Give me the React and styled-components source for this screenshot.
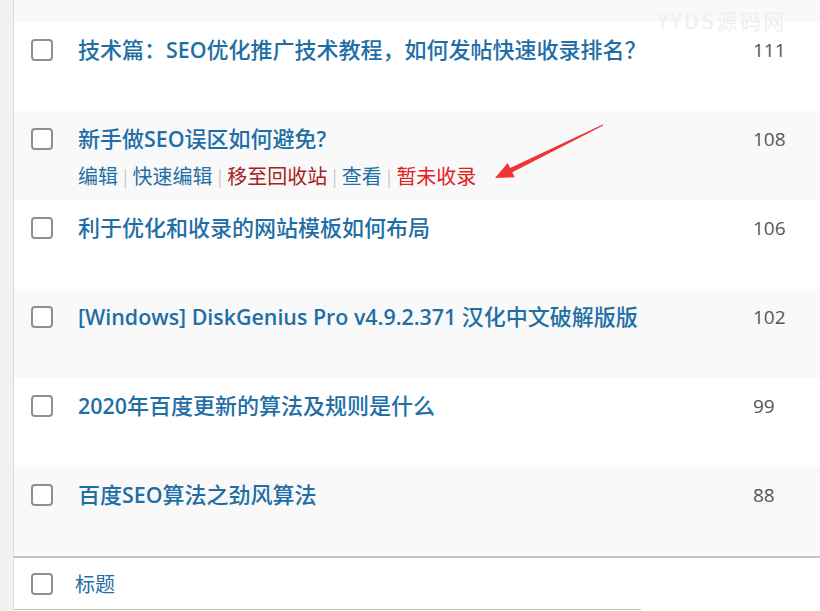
import React from "react";
import styled, { createGlobalStyle } from "styled-components";

const Global = createGlobalStyle`
  html, body { margin: 0; padding: 0; background: #ffffff; }
  body { font-family: "Open Sans", "Noto Sans CJK SC", sans-serif; }
`;

const Page = styled.div`
  position: relative;
  display: flex;
  width: 820px;
  height: 611px;
  overflow: hidden;
  background: #ffffff;
`;

const LeftStrip = styled.div`
  width: 13px;
  flex: none;
  background: #f1f1f1;
  border-right: 1px solid #dcdcde;
`;

const Table = styled.div`
  flex: 1;
  display: flex;
  flex-direction: column;
`;

const Stub = styled.div`
  height: 22px;
  background: #f9f9f9;
`;

const Row = styled.div`
  display: grid;
  grid-template-columns: 64px 675px 1fr;
  height: 89px;
  box-sizing: border-box;
  padding-top: 11px;
  background: ${(p) => (p.$striped ? "#f9f9f9" : "#ffffff")};
`;

const CheckCell = styled.div`
  padding-left: 17px;
  padding-top: ${(p) => p.$top}px;
`;

const Check = styled.span`
  display: block;
  width: 22px;
  height: 22px;
  box-sizing: border-box;
  border: 2px solid #8c8f94;
  border-radius: 4px;
  background: #ffffff;
`;

const TitleCell = styled.div`
  display: flex;
  flex-direction: column;
`;

const Title = styled.a`
  font-family: "Noto Sans CJK SC", sans-serif;
  font-size: 22px;
  font-weight: 500;
  line-height: 30px;
  color: #1f6fa6;
  text-decoration: none;
  white-space: nowrap;
`;

const Latin = styled.span`
  font-family: "Open Sans", sans-serif;
  font-size: 21.4px;
  font-weight: 600;
`;

const Actions = styled.div`
  margin-top: 7px;
  display: flex;
  align-items: center;
  font-family: "Noto Sans CJK SC", sans-serif;
  font-size: 20px;
  line-height: 30px;
  white-space: nowrap;
`;

const Action = styled.a`
  color: ${(p) => p.$color || "#1f6fa6"};
  text-decoration: none;
`;

const Sep = styled.span`
  color: #c3c4c7;
  font-size: 17px;
  margin: 0 5px;
`;

const Count = styled.div`
  padding-top: 2px;
  font-family: "Open Sans", sans-serif;
  font-size: 19px;
  line-height: 30px;
  color: #50575e;
`;

const FooterTop = styled.div`
  height: 2px;
  background: #c3c4c7;
`;

const Footer = styled.div`
  display: flex;
  height: 52px;
`;

const FooterCols = styled.div`
  width: 627px;
  display: flex;
  box-sizing: border-box;
  border-bottom: 1px solid #c3c4c7;
`;

const FooterTitle = styled.span`
  margin-left: 22px;
  font-family: "Noto Sans CJK SC", sans-serif;
  font-size: 20px;
  line-height: 30px;
  padding-top: 11px;
  color: #1f6fa6;
`;

const Watermark = styled.div`
  position: absolute;
  left: 657px;
  top: 5px;
  font-family: "Noto Sans CJK SC", sans-serif;
  font-size: 21px;
  letter-spacing: 2.5px;
  color: #efefef;
  pointer-events: none;
`;

const ArrowSvg = styled.svg`
  position: absolute;
  left: 480px;
  top: 115px;
  pointer-events: none;
`;

const rows = [
  { title: "技术篇：SEO优化推广技术教程，如何发帖快速收录排名？", count: 111 },
  { title: "新手做SEO误区如何避免?", count: 108, actions: true },
  { title: "利于优化和收录的网站模板如何布局", count: 106 },
  { title: "[Windows] DiskGenius Pro v4.9.2.371 汉化中文破解版版", count: 102 },
  { title: "2020年百度更新的算法及规则是什么", count: 99 },
  { title: "百度SEO算法之劲风算法", count: 88 },
];

const actionList = [
  { label: "编辑" },
  { label: "快速编辑" },
  { label: "移至回收站", color: "#a82222" },
  { label: "查看" },
  { label: "暂未收录", color: "#e3201d" },
];

function splitRuns(text) {
  const parts = text.match(/[\x20-\x7e]+|[^\x20-\x7e]+/g) || [];
  return parts.map((p, i) =>
    /^[\x20-\x7e]+$/.test(p) ? <Latin key={i}>{p}</Latin> : <React.Fragment key={i}>{p}</React.Fragment>
  );
}

export default function App() {
  return (
    <Page>
      <Global />
      <LeftStrip />
      <Table>
        <Stub />
        {rows.map((r, i) => (
          <Row key={i} $striped={i % 2 === 1}>
            <CheckCell $top={6}>
              <Check />
            </CheckCell>
            <TitleCell>
              <Title href="#">{splitRuns(r.title)}</Title>
              {r.actions && (
                <Actions>
                  {actionList.map((a, j) => (
                    <React.Fragment key={j}>
                      {j > 0 && <Sep>|</Sep>}
                      <Action href="#" $color={a.color}>{a.label}</Action>
                    </React.Fragment>
                  ))}
                </Actions>
              )}
            </TitleCell>
            <Count>{r.count}</Count>
          </Row>
        ))}
        <FooterTop />
        <Footer>
          <FooterCols>
            <CheckCell $top={15}>
              <Check />
            </CheckCell>
            <FooterTitle>标题</FooterTitle>
          </FooterCols>
        </Footer>
      </Table>
      <Watermark>YYDS源码网</Watermark>
      <ArrowSvg width="140" height="70" viewBox="480 115 140 70">
        <polygon
          points="495,178 507.7,162.9 510.1,167.9 602.8,124.6 603.2,125.4 512.3,172.3 514.7,177.3"
          fill="#ef3535"
        />
      </ArrowSvg>
    </Page>
  );
}
